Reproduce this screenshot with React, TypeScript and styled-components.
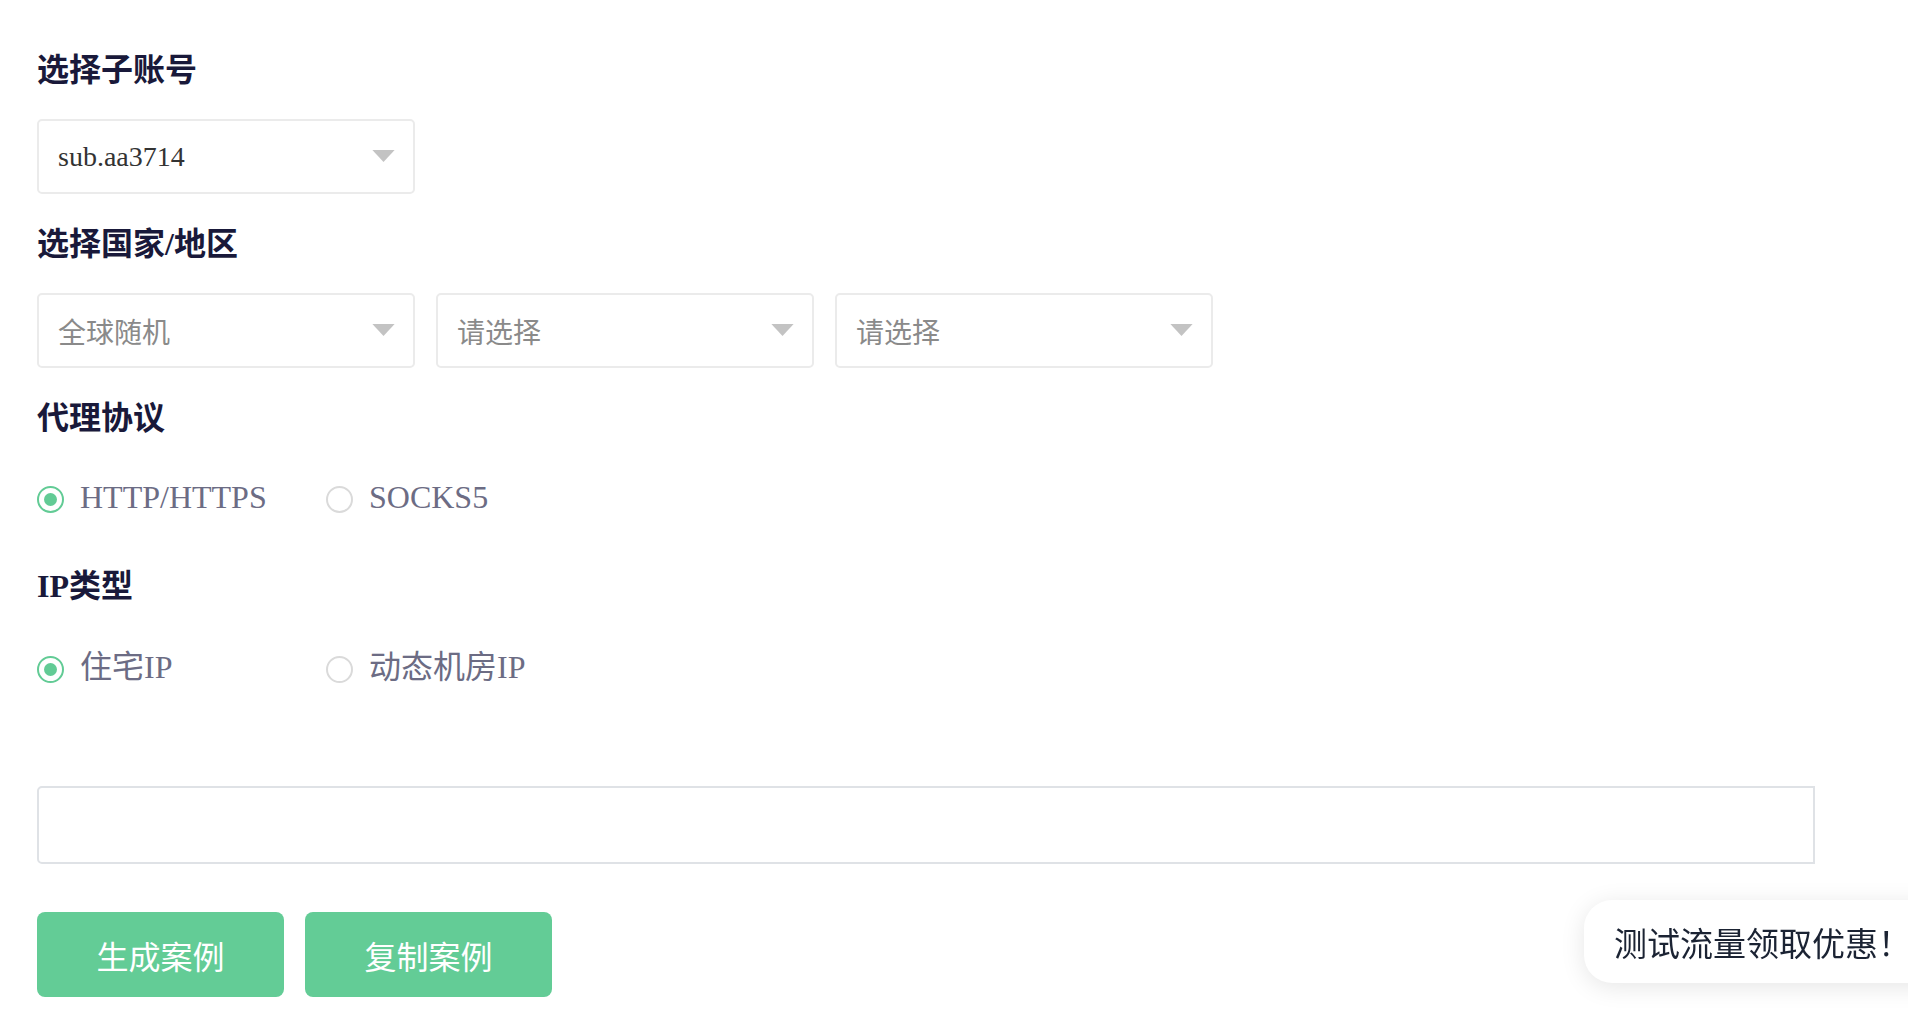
import styled, { createGlobalStyle } from "styled-components"

const GlobalStyle = createGlobalStyle`
  html, body {
    margin: 0;
    padding: 0;
    background: #ffffff;
    overflow-x: hidden;
  }
`

const SERIF = `"Liberation Serif", "Noto Sans CJK SC", serif`
const SANS = `"Liberation Sans", "Noto Sans CJK SC", sans-serif`

type Option = { label: string; checked?: boolean }

const protocols: Option[] = [
  { label: "HTTP/HTTPS", checked: true },
  { label: "SOCKS5" },
]

const ipTypes: Option[] = [
  { label: "住宅IP", checked: true },
  { label: "动态机房IP" },
]

const Caret = () => (
  <CaretIcon viewBox="0 0 24 14" aria-hidden>
    <path d="M0 0 H24 L12 13 Z" fill="#c3c3c3" />
  </CaretIcon>
)

const RadioGroup = ({ options }: { options: Option[] }) => (
  <RadioRow>
    {options.map((o) => (
      <RadioItem key={o.label}>
        <RadioCircle $checked={!!o.checked} />
        <RadioLabel>{o.label}</RadioLabel>
      </RadioItem>
    ))}
  </RadioRow>
)

const App = () => {
  return (
    <>
      <GlobalStyle />
      <Page>
        <Heading>选择子账号</Heading>
        <SelectRow $after={30}>
          <SelectBox>
            <SelectValue $filled>sub.aa3714</SelectValue>
            <Caret />
          </SelectBox>
        </SelectRow>

        <Heading>选择国家/地区</Heading>
        <SelectRow $after={30}>
          <SelectBox>
            <SelectValue>全球随机</SelectValue>
            <Caret />
          </SelectBox>
          <SelectBox>
            <SelectValue>请选择</SelectValue>
            <Caret />
          </SelectBox>
          <SelectBox>
            <SelectValue>请选择</SelectValue>
            <Caret />
          </SelectBox>
        </SelectRow>

        <Heading $after={39}>代理协议</Heading>
        <RadioBlock $after={49}>
          <RadioGroup options={protocols} />
        </RadioBlock>

        <Heading $after={41}>IP类型</Heading>
        <RadioBlock $after={99}>
          <RadioGroup options={ipTypes} />
        </RadioBlock>

        <CodeArea />

        <ButtonRow>
          <GreenButton>生成案例</GreenButton>
          <GreenButton>复制案例</GreenButton>
        </ButtonRow>
      </Page>

      <PromoToast>测试流量领取优惠！</PromoToast>
    </>
  )
}

export default App

const Page = styled.div`
  padding: 50px 93px 40px 37px;
  box-sizing: border-box;
  width: 100%;
  min-height: 1032px;
  user-select: none;
`

const Heading = styled.div<{ $after?: number }>`
  font-family: ${SERIF};
  font-weight: 700;
  font-size: 32px;
  line-height: 40px;
  height: 40px;
  color: #19193a;
  margin-bottom: ${(p) => p.$after ?? 29}px;
`

const SelectRow = styled.div<{ $after: number }>`
  display: flex;
  gap: 21px;
  margin-bottom: ${(p) => p.$after}px;
`

const SelectBox = styled.div`
  width: 378px;
  height: 75px;
  box-sizing: border-box;
  border: 2px solid #ebebeb;
  border-radius: 5px;
  display: flex;
  align-items: center;
  justify-content: space-between;
  padding: 0 18px 0 19px;
  background: #fff;
`

const SelectValue = styled.span<{ $filled?: boolean }>`
  font-family: ${(p) => (p.$filled ? SERIF : SANS)};
  font-size: 28px;
  color: ${(p) => (p.$filled ? "#333333" : "#8a8a8a")};
`

const CaretIcon = styled.svg`
  width: 23px;
  height: 13px;
  flex-shrink: 0;
`

const RadioBlock = styled.div<{ $after: number }>`
  margin-bottom: ${(p) => p.$after}px;
`

const RadioRow = styled.div`
  display: flex;
  height: 40px;
  align-items: center;
`

const RadioItem = styled.label`
  width: 289px;
  display: flex;
  align-items: center;
  gap: 16px;
`

const RadioCircle = styled.span<{ $checked: boolean }>`
  width: 27px;
  height: 27px;
  box-sizing: border-box;
  border-radius: 50%;
  border: 2px solid ${(p) => (p.$checked ? "#62cb95" : "#dadada")};
  display: flex;
  align-items: center;
  justify-content: center;
  margin-top: 4px;

  &::after {
    content: "";
    width: 13px;
    height: 13px;
    border-radius: 50%;
    background: ${(p) => (p.$checked ? "#62cb95" : "transparent")};
  }
`

const RadioLabel = styled.span`
  font-family: ${SERIF};
  font-size: 32px;
  line-height: 40px;
  color: #6c6c84;
`

const CodeArea = styled.div`
  width: 100%;
  height: 78px;
  box-sizing: border-box;
  border: 2px solid #dfe2e6;
  border-radius: 5px 0 0 5px;
  margin-bottom: 48px;
`

const ButtonRow = styled.div`
  display: flex;
  gap: 21px;
`

const GreenButton = styled.button`
  width: 247px;
  height: 85px;
  border: none;
  border-radius: 8px;
  background: #63cc96;
  color: #ffffff;
  font-family: ${SANS};
  font-size: 32px;
  cursor: pointer;
`

const PromoToast = styled.div`
  position: fixed;
  left: 1584px;
  right: -80px;
  bottom: 49px;
  height: 83px;
  display: flex;
  align-items: center;
  padding: 0 80px 0 30px;
  background: #ffffff;
  border-radius: 28px;
  box-shadow: 0 4px 24px rgba(0, 0, 0, 0.1);
  font-family: ${SANS};
  font-size: 33px;
  color: #1b2333;
  white-space: nowrap;
`
